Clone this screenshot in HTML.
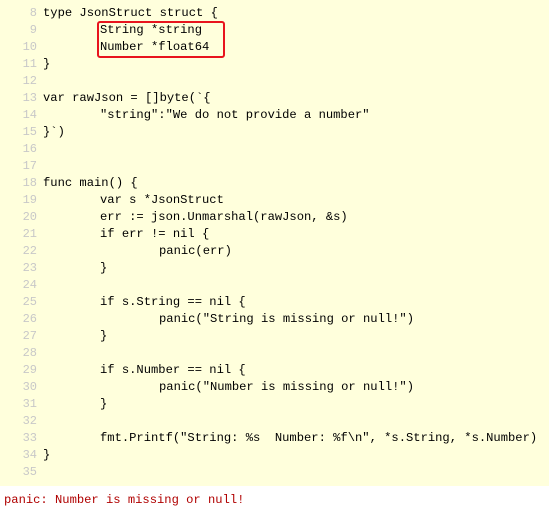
<!DOCTYPE html>
<html><head><style>
html,body{margin:0;padding:0;width:549px;height:519px;overflow:hidden;background:#fff}
.ed{position:absolute;left:0;top:0;width:549px;height:486px;background:#ffffdc}
.l{position:absolute;left:0;height:17px;line-height:17px;font-family:"Liberation Mono",monospace;font-size:12.15px;white-space:pre;color:#000}
.n{position:absolute;left:0;width:37px;text-align:right;color:#c8c8c8;font-family:"Liberation Mono",monospace;font-size:12px;line-height:17px;height:17px}
.c{position:absolute;left:43px;top:0}
.i1{left:100px}.i2{left:159px}
.box{position:absolute;left:97px;top:21px;width:128px;height:37px;border:2px solid #e8141e;border-radius:3px;box-sizing:border-box}
.out{position:absolute;left:4px;top:493px;font-family:"Liberation Mono",monospace;font-size:12.15px;color:#b00000;white-space:pre}
</style></head><body>
<div class="ed">
<div class="l" style="top:5px"><span class="n">8</span><span class="c">type JsonStruct struct {</span></div>
<div class="l" style="top:22px"><span class="n">9</span><span class="c i1">String *string</span></div>
<div class="l" style="top:39px"><span class="n">10</span><span class="c i1">Number *float64</span></div>
<div class="l" style="top:56px"><span class="n">11</span><span class="c">}</span></div>
<div class="l" style="top:73px"><span class="n">12</span><span class="c"></span></div>
<div class="l" style="top:90px"><span class="n">13</span><span class="c">var rawJson = []byte(`{</span></div>
<div class="l" style="top:107px"><span class="n">14</span><span class="c i1">"string":"We do not provide a number"</span></div>
<div class="l" style="top:124px"><span class="n">15</span><span class="c">}`)</span></div>
<div class="l" style="top:141px"><span class="n">16</span></div>
<div class="l" style="top:158px"><span class="n">17</span></div>
<div class="l" style="top:175px"><span class="n">18</span><span class="c">func main() {</span></div>
<div class="l" style="top:192px"><span class="n">19</span><span class="c i1">var s *JsonStruct</span></div>
<div class="l" style="top:209px"><span class="n">20</span><span class="c i1">err := json.Unmarshal(rawJson, &amp;s)</span></div>
<div class="l" style="top:226px"><span class="n">21</span><span class="c i1">if err != nil {</span></div>
<div class="l" style="top:243px"><span class="n">22</span><span class="c i2">panic(err)</span></div>
<div class="l" style="top:260px"><span class="n">23</span><span class="c i1">}</span></div>
<div class="l" style="top:277px"><span class="n">24</span></div>
<div class="l" style="top:294px"><span class="n">25</span><span class="c i1">if s.String == nil {</span></div>
<div class="l" style="top:311px"><span class="n">26</span><span class="c i2">panic("String is missing or null!")</span></div>
<div class="l" style="top:328px"><span class="n">27</span><span class="c i1">}</span></div>
<div class="l" style="top:345px"><span class="n">28</span></div>
<div class="l" style="top:362px"><span class="n">29</span><span class="c i1">if s.Number == nil {</span></div>
<div class="l" style="top:379px"><span class="n">30</span><span class="c i2">panic("Number is missing or null!")</span></div>
<div class="l" style="top:396px"><span class="n">31</span><span class="c i1">}</span></div>
<div class="l" style="top:413px"><span class="n">32</span></div>
<div class="l" style="top:430px"><span class="n">33</span><span class="c i1">fmt.Printf("String: %s  Number: %f\n", *s.String, *s.Number)</span></div>
<div class="l" style="top:447px"><span class="n">34</span><span class="c">}</span></div>
<div class="l" style="top:464px"><span class="n">35</span></div>
<div class="box"></div>
</div>
<div class="out">panic: Number is missing or null!</div>
</body></html>
